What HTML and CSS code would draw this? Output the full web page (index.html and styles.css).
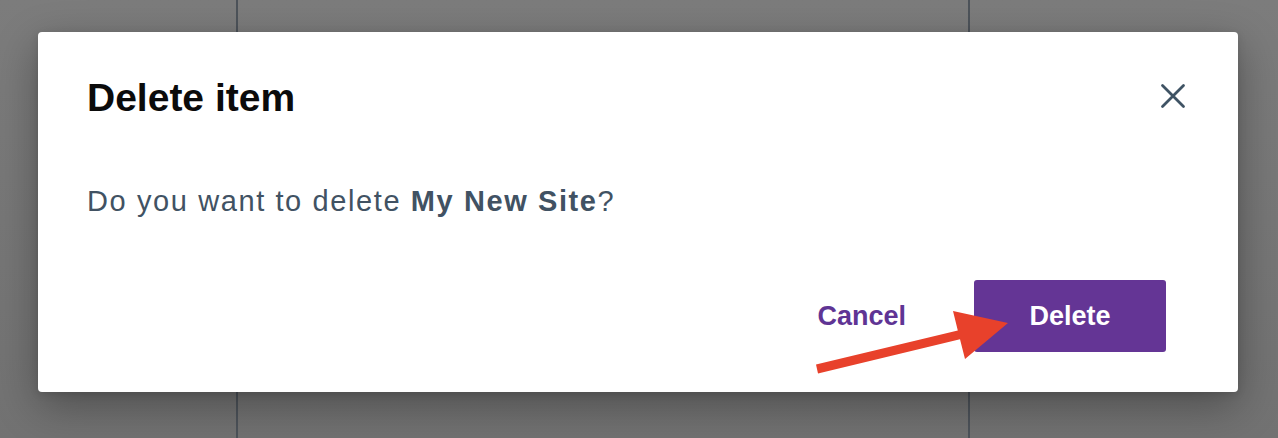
FILE: index.html
```html
<!DOCTYPE html>
<html lang="en">
<head>
<meta charset="utf-8">
<title>Delete item</title>
<link rel="stylesheet" href="styles.css">
</head>
<body>
<div class="backdrop">
  <div class="col col-a"></div>
  <div class="col col-b"></div>
  <div class="col col-c"></div>
</div>
<div class="modal" role="dialog" aria-labelledby="modal-title">
  <div class="modal-header">
    <h2 class="modal-title" id="modal-title">Delete item</h2>
    <button class="close-btn" aria-label="Close">
      <svg width="26" height="26" viewBox="0 0 26 26" aria-hidden="true">
        <path d="M2.5 2.5 L23.5 23.5 M23.5 2.5 L2.5 23.5" stroke="#3f5364" stroke-width="2.8" stroke-linecap="round" fill="none"/>
      </svg>
    </button>
  </div>
  <p class="modal-body">Do you want to delete <strong>My New Site</strong>?</p>
  <div class="modal-footer">
    <button class="btn btn-link">Cancel</button>
    <button class="btn btn-primary">Delete</button>
  </div>
</div>
<svg class="annotation" width="1278" height="438" viewBox="0 0 1278 438" aria-hidden="true">
  <polygon points="816,364.6 957.8,330.4 953,311 1008,323 965,359 960,339.2 818,373.4" fill="#e8412b"/>
</svg>
</body>
</html>
```

FILE: styles.css
```css
* { box-sizing: border-box; }

html, body {
  margin: 0;
  padding: 0;
  width: 1278px;
  height: 438px;
  overflow: hidden;
}

body {
  position: relative;
  font-family: "Liberation Sans", Arial, Helvetica, sans-serif;
  background: linear-gradient(180deg, #7c7c7c 0%, #727272 100%);
}

.backdrop {
  display: flex;
  height: 438px;
}

.col { height: 100%; }
.col-a { width: 238px; border-right: 2px solid #4d535a; }
.col-b { width: 732px; border-right: 2px solid #4d535a; }
.col-c { flex: 1; }

.modal {
  position: absolute;
  left: 38px;
  top: 32px;
  width: 1200px;
  height: 360px;
  background: #ffffff;
  border-radius: 4px;
  box-shadow: 0 14px 44px rgba(0, 0, 0, 0.32), 0 2px 8px rgba(0, 0, 0, 0.12);
  padding: 42px 52px 40px 49px;
  display: flex;
  flex-direction: column;
}

.modal-header {
  display: flex;
  justify-content: space-between;
  align-items: flex-start;
  height: 48px;
}

.modal-title {
  margin: 0;
  font-size: 39px;
  line-height: 48px;
  font-weight: 700;
  color: #0b0b0b;
}

.close-btn {
  margin-top: 9px;
  padding: 0;
  border: 0;
  background: none;
  width: 26px;
  height: 26px;
  display: flex;
  cursor: pointer;
}

.modal-body {
  margin: 61px 0 0 0;
  font-size: 29px;
  line-height: 36px;
  letter-spacing: 1.6px;
  color: #415263;
}

.modal-body strong { font-weight: 700; }

.modal-footer {
  margin-top: 61px;
  display: flex;
  justify-content: flex-end;
  align-items: center;
  gap: 52px;
  padding-right: 20px;
}

.btn {
  font-family: "Liberation Sans", Arial, Helvetica, sans-serif;
  font-size: 27px;
  font-weight: 700;
  height: 72px;
  line-height: 72px;
  border: 0;
  border-radius: 3px;
  cursor: pointer;
}

.btn-link {
  background: none;
  color: #5f3494;
  padding: 0 16px;
}

.btn-primary {
  background: #643595;
  color: #ffffff;
  padding: 0 55px;
  width: 192px;
}

.annotation {
  position: absolute;
  left: 0;
  top: 0;
  pointer-events: none;
}
```
